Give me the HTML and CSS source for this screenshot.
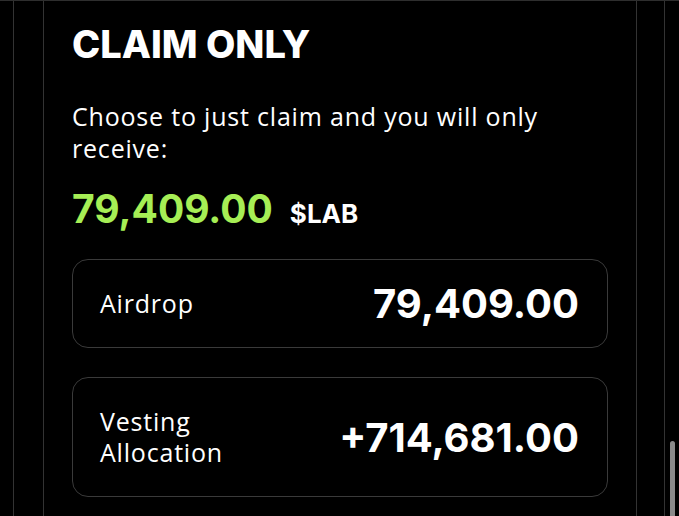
FILE: index.html
```html
<!DOCTYPE html>
<html lang="en">
<head>
    <meta charset="UTF-8">
    <meta name="viewport" content="width=device-width, initial-scale=1.0">
    <title>Claim Only</title>
    <link rel="stylesheet" href="styles.css">
</head>
<body>
    <div class="frame">
        <div class="panel">
            <h1>CLAIM ONLY</h1>
            <p class="intro">Choose to just claim and you will only receive:</p>
            <div class="total">
                <span class="total-value">79,409.00</span>
                <span class="token">$LAB</span>
            </div>
            <div class="rows">
                <div class="row">
                    <span class="row-label">Airdrop</span>
                    <span class="row-value">79,409.00</span>
                </div>
                <div class="row">
                    <span class="row-label">Vesting<br>Allocation</span>
                    <span class="row-value">+714,681.00</span>
                </div>
            </div>
        </div>
    </div>
    <div class="scrollbar"></div>
</body>
</html>
```

FILE: styles.css
```css
* {
    box-sizing: border-box;
    margin: 0;
    padding: 0;
}
body {
    font-family: Inter, "Noto Sans", sans-serif;
    background-color: #000;
    color: #fff;
    height: 516px;
    overflow: hidden;
    border-top: 1px solid #2e2e2e;
}
.frame {
    margin: 0 14px 0 13px;
    padding: 0 27px 0 29px;
    border-left: 1px solid #333;
    border-right: 1px solid #333;
    height: 100%;
}
.panel {
    border-left: 1px solid #333;
    border-right: 1px solid #333;
    padding: 20px 28px 0 28px;
    height: 100%;
}
h1 {
    font-size: 38px;
    line-height: 46px;
    font-weight: 800;
    margin-bottom: 33px;
}
.intro {
    font-family: "Open Sans", Inter, sans-serif;
    font-size: 25px;
    letter-spacing: 0.8px;
    line-height: 32px;
    max-width: 500px;
    margin-bottom: 21px;
}
.total {
    display: flex;
    align-items: baseline;
    gap: 17px;
    line-height: 48px;
    margin-bottom: 21px;
}
.total-value {
    font-size: 39px;
    font-weight: 700;
    color: #a6ee55;
}
.token {
    font-size: 26px;
    font-weight: 700;
}
.rows {
    display: flex;
    flex-direction: column;
    gap: 29px;
}
.row {
    display: flex;
    justify-content: space-between;
    align-items: center;
    border: 1px solid #3a3a3a;
    border-radius: 16px;
    padding: 28px 28px 28px 27px;
}
.row-label {
    font-family: "Open Sans", Inter, sans-serif;
    font-size: 25px;
    letter-spacing: 0.8px;
    line-height: 31px;
}
.row-value {
    font-size: 40px;
    font-weight: 700;
    line-height: 31px;
}
.scrollbar {
    position: absolute;
    left: 670px;
    top: 441px;
    width: 5px;
    height: 80px;
    border-radius: 3px;
    background: #8a8a8a;
}
```
